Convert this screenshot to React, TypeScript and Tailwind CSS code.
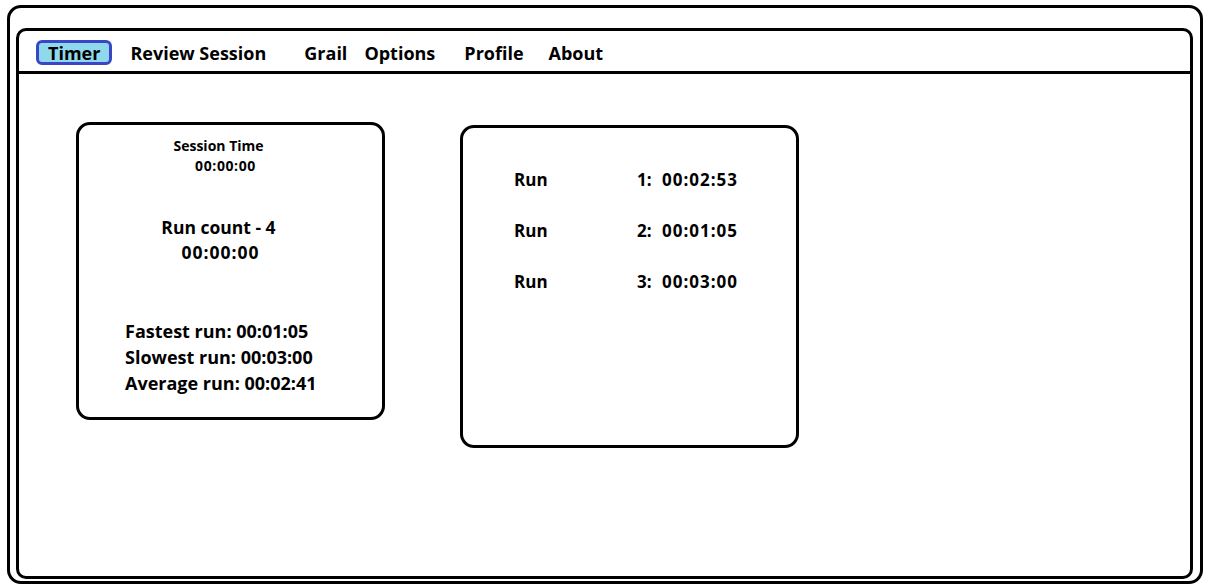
import React from "react";

const font = { fontFamily: '"Open Sans", "Noto Sans", "Liberation Sans", sans-serif' };

export default function App() {
  const navItems = [
    { label: "Review Session", ml: "ml-[18px]" },
    { label: "Grail", ml: "ml-[38px]" },
    { label: "Options", ml: "ml-[17px]" },
    { label: "Profile", ml: "ml-[29px]" },
    { label: "About", ml: "ml-[25px]" },
  ];
  const runs = [
    ["1:", "00:02:53"],
    ["2:", "00:01:05"],
    ["3:", "00:03:00"],
  ];
  return (
    <div className="w-[1206px] h-[587px] bg-white text-black font-bold" style={font}>
      <div className="ml-[7px] pt-[5px]">
        <div className="w-[1196px] h-[579px] border-[3px] border-black rounded-[14px] pt-[20px] pl-[6px] pr-[7px] pb-[2px]">
          <div className="h-full border-[3px] border-black rounded-[10px] flex flex-col">
            <nav className="h-[43px] shrink-0 border-b-[3px] border-black flex items-start pt-[9px] pl-[17px] text-[18px] leading-none">
              <div className="h-[25px] px-[9px] flex items-center border-[3px] border-[#3a46c6] bg-[#8fd9ec] rounded-[6px]">
                Timer
              </div>
              {navItems.map((n) => (
                <span key={n.label} className={`${n.ml} h-[25px] flex items-center`}>
                  {n.label}
                </span>
              ))}
            </nav>
            <div className="flex items-start pl-[57px] pt-[48px]">
              <div className="w-[309px] h-[298px] border-[3px] border-black rounded-[14px] pt-[11px] flex flex-col">
                <div className="pr-[24px] flex flex-col items-center">
                  <div className="text-[14px] leading-[20px]">Session Time</div>
                  <div className="text-[14px] leading-[20px] pl-[14px] tracking-[0.6px]">00:00:00</div>
                  <div className="mt-[39px] text-[17.5px] leading-[25px]">Run count - 4</div>
                  <div className="text-[17.5px] leading-[25px] pl-[4px] tracking-[1px]">00:00:00</div>
                </div>
                <div className="mt-[53px] pl-[46px] text-[18px] leading-[26px]">
                  <div>Fastest run: 00:01:05</div>
                  <div>Slowest run: 00:03:00</div>
                  <div>Average run: 00:02:41</div>
                </div>
              </div>
              <div className="ml-[75px] mt-[3px] w-[339px] h-[323px] border-[3px] border-black rounded-[14px] pt-[39px] pl-[51px] flex flex-col gap-[26px] text-[17px] leading-[25px]">
                {runs.map(([n, t]) => (
                  <div key={n} className="flex">
                    <span className="w-[123px]">Run</span>
                    <span className="w-[25px]">{n}</span>
                    <span className="tracking-[1px]">{t}</span>
                  </div>
                ))}
              </div>
            </div>
          </div>
        </div>
      </div>
    </div>
  );
}
